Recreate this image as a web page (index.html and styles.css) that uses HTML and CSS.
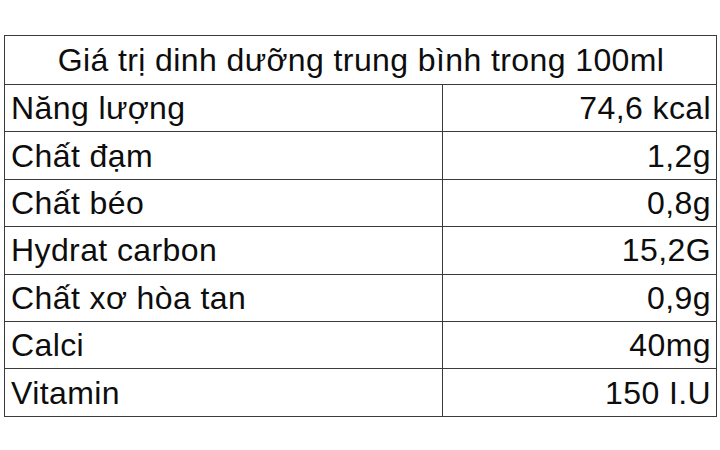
FILE: index.html
```html
<!DOCTYPE html>
<html lang="vi">
<head>
<meta charset="utf-8">
<link rel="stylesheet" href="styles.css">
</head>
<body>
<table class="nutri">
  <colgroup>
    <col class="col-name">
    <col class="col-val">
  </colgroup>
  <thead>
    <tr><th colspan="2" class="title">Giá trị dinh dưỡng trung bình trong 100ml</th></tr>
  </thead>
  <tbody>
    <tr><td class="name">Năng lượng</td><td class="val">74,6 kcal</td></tr>
    <tr><td class="name">Chất đạm</td><td class="val">1,2g</td></tr>
    <tr><td class="name">Chất béo</td><td class="val">0,8g</td></tr>
    <tr><td class="name">Hydrat carbon</td><td class="val">15,2G</td></tr>
    <tr><td class="name">Chất xơ hòa tan</td><td class="val">0,9g</td></tr>
    <tr><td class="name">Calci</td><td class="val">40mg</td></tr>
    <tr><td class="name">Vitamin</td><td class="val">150 I.U</td></tr>
  </tbody>
</table>
</body>
</html>
```
FILE: styles.css
```css
html, body {
  margin: 0;
  padding: 0;
  background: #ffffff;
}
body {
  padding: 35px 0 0 4px;
  font-family: "Liberation Sans", Arial, sans-serif;
  color: #0d0d0d;
}
.nutri {
  border-collapse: collapse;
  width: 713px;
  table-layout: fixed;
}
.col-name {
  width: 438px;
}
.nutri th, .nutri td {
  border: 1.5px solid #3a3a3a;
  padding: 0 5px 0 6px;
  font-size: 32px;
  letter-spacing: 0.4px;
  font-weight: normal;
  line-height: 1;
}
.title {
  height: 48px;
  text-align: center;
  padding-left: 22px;
}
.name {
  height: 46.4px;
  text-align: left;
}
.val {
  height: 46.4px;
  text-align: right;
}
```
